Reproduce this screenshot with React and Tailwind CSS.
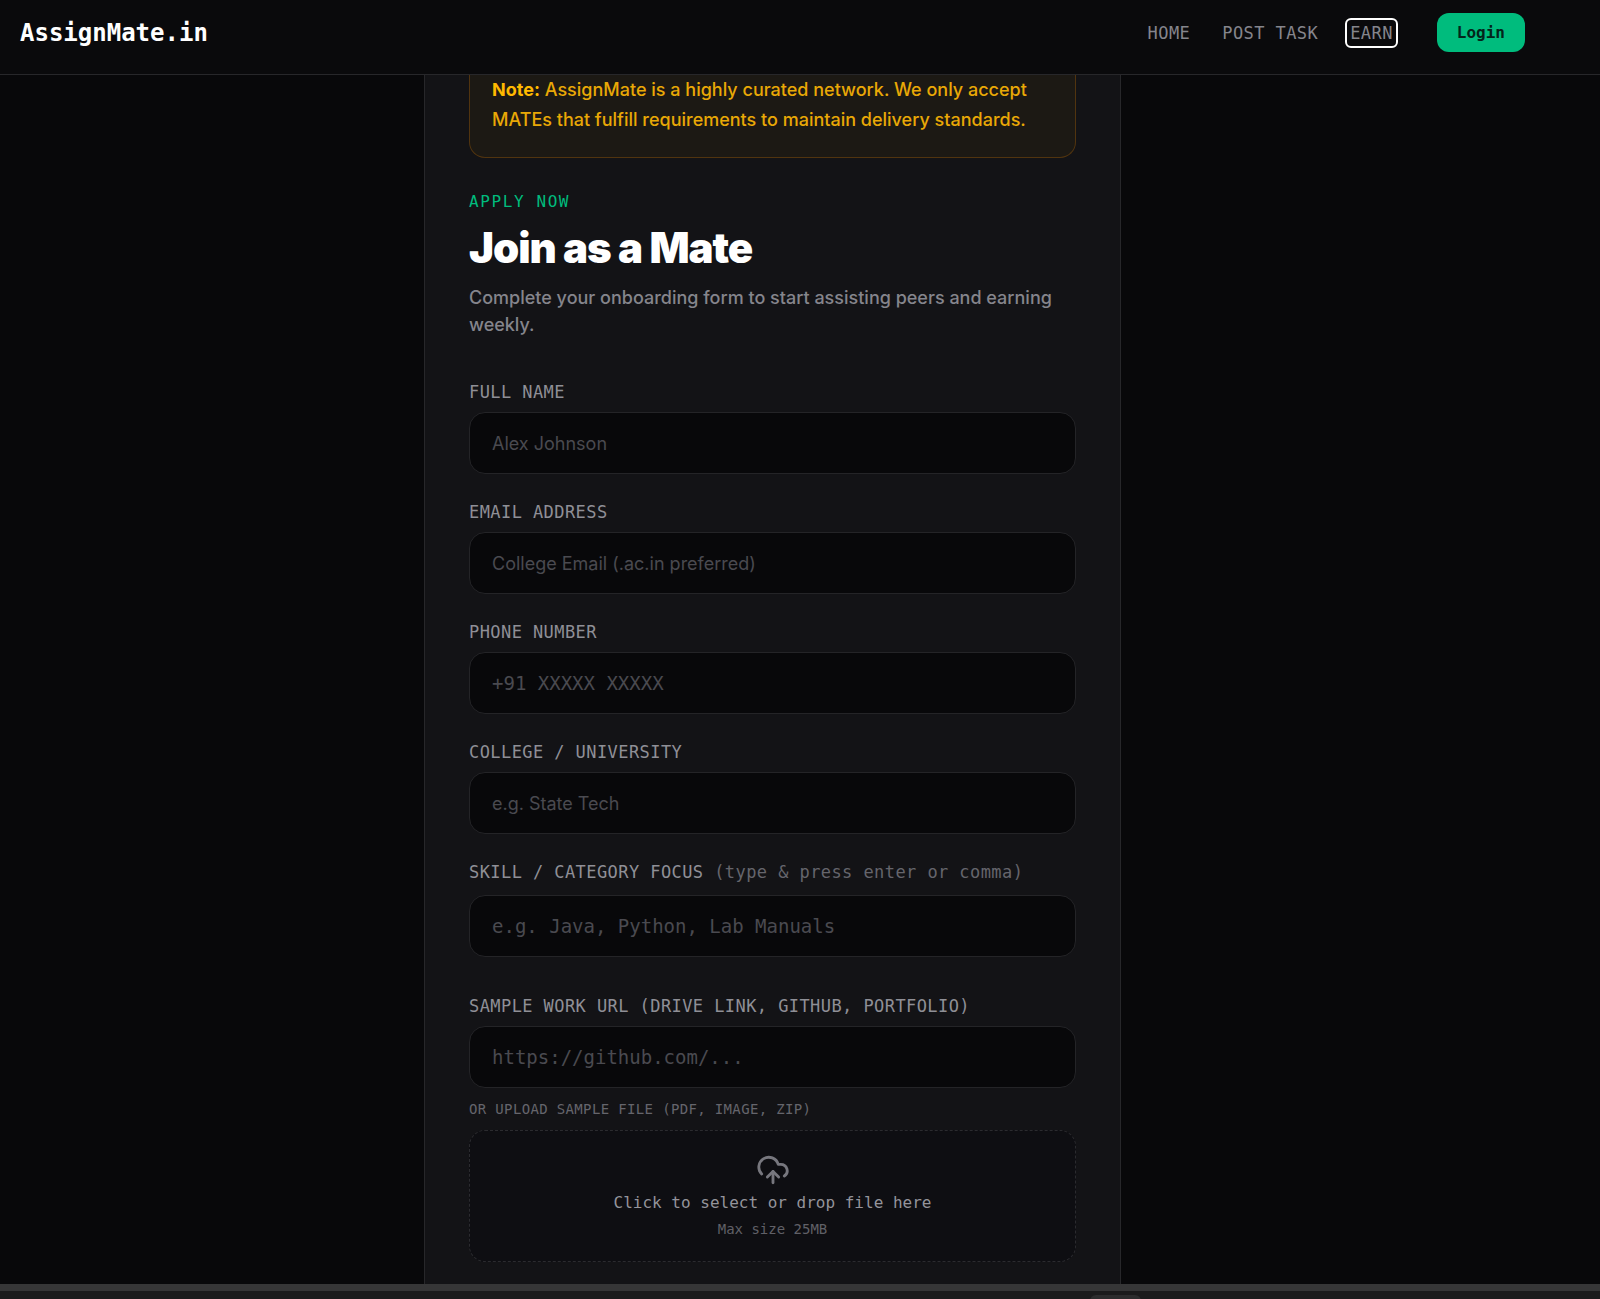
import { CloudUpload } from "lucide-react";

const fields = [
  { id: "name", label: "Full name", placeholder: "Alex Johnson", type: "text" },
  { id: "email", label: "Email address", placeholder: "College Email (.ac.in preferred)", type: "email" },
  { id: "phone", label: "Phone number", placeholder: "+91 XXXXX XXXXX", type: "tel", mono: true },
  { id: "college", label: "College / University", placeholder: "e.g. State Tech", type: "text" },
];

export default function App() {
  return (
    <div className="flex min-h-screen flex-col bg-[#08080a] font-['Inter','Liberation_Sans',sans-serif] text-zinc-400">
      <Header />
      <main className="flex grow justify-center px-4 lg:pr-[55px] lg:pl-0">
        <section className="w-full max-w-[697px] border-x border-[#27272a] bg-[#131316] px-11 pb-[22px]">
          <p className="rounded-b-2xl border-x border-b border-[#51340f] bg-[#1c1914] px-[22px] pb-[22px] text-[18px] leading-[30px] font-medium text-[#e9a806]">
            <strong className="font-bold text-[#ffb900]">Note:</strong> AssignMate is a highly curated network. We only
            accept MATEs that fulfill requirements to maintain delivery standards.
          </p>
          <p className="mt-8 font-['DejaVu_Sans_Mono',monospace] text-[16px] leading-6 tracking-widest text-[#00bc7d] uppercase">
            Apply now
          </p>
          <h1 className="mt-2.5 text-[42px] leading-[48px] font-black tracking-tight text-white">Join as a Mate</h1>
          <p className="mt-3 text-[18px] leading-[27px] font-medium text-[#85858c]">
            Complete your onboarding form to start assisting peers and earning weekly.
          </p>
          <ApplyForm />
        </section>
      </main>
      <Dock />
    </div>
  );
}

function Header() {
  return (
    <header className="border-b border-[#27272a] bg-[#0a0a0c]">
      <div className="flex items-center justify-between pt-[13px] pr-[75px] pb-[22px] pl-5 font-['DejaVu_Sans_Mono',monospace]">
        <a href="#" className="text-[24px] leading-8 font-bold text-white">
          AssignMate.in
        </a>
        <nav className="flex items-center gap-8 text-[17px] leading-5 tracking-wide text-[#85858c] uppercase">
          <a href="#home">Home</a>
          <a href="#post">Post task</a>
          <a href="#earn" className="rounded-[1px] outline-2 outline-offset-3 outline-white">
            Earn
          </a>
          <button
            type="button"
            className="ml-3 h-[39px] rounded-xl bg-[#00bc7d] px-5 text-[16px] font-bold tracking-normal text-[#04251b] normal-case"
          >
            Login
          </button>
        </nav>
      </div>
    </header>
  );
}

function ApplyForm() {
  return (
    <form className="mt-[42px] flex flex-col">
      <div className="flex flex-col gap-[26px]">
        {fields.map((field) => (
          <div key={field.id} className="flex flex-col gap-2">
            <Label htmlFor={field.id}>{field.label}</Label>
            <TextInput id={field.id} type={field.type} placeholder={field.placeholder} mono={field.mono} />
          </div>
        ))}
        <div className="flex flex-col gap-[11px]">
          <Label htmlFor="skills">
            Skill / Category focus <span className="text-[#65656c] normal-case">(type &amp; press enter or comma)</span>
          </Label>
          <TextInput id="skills" type="text" placeholder="e.g. Java, Python, Lab Manuals" mono />
        </div>
      </div>
      <div className="mt-[37px] flex flex-col gap-2">
        <Label htmlFor="sample">Sample work URL (Drive link, GitHub, Portfolio)</Label>
        <TextInput id="sample" type="url" placeholder="https://github.com/..." mono />
      </div>
      <div className="mt-[11px] flex flex-col gap-[11px] font-['DejaVu_Sans_Mono',monospace]">
        <label htmlFor="upload" className="text-[14px] leading-5 tracking-wide text-[#65656c] uppercase">
          Or upload sample file (PDF, image, zip)
        </label>
        <button
          id="upload"
          type="button"
          className="flex flex-col items-center gap-1 rounded-2xl border border-dashed border-[#2b2b2f] bg-[#0e0e12] py-[22px]"
        >
          <CloudUpload size={34} className="text-[#77777e]" />
          <span className="text-[16px] leading-6 text-[#94949b]">Click to select or drop file here</span>
          <span className="text-[14px] leading-5 text-[#606067]">Max size 25MB</span>
        </button>
      </div>
    </form>
  );
}

function Label({ htmlFor, children }) {
  return (
    <label
      htmlFor={htmlFor}
      className="font-['DejaVu_Sans_Mono',monospace] text-[17px] leading-6 tracking-wide text-[#8f8f96] uppercase"
    >
      {children}
    </label>
  );
}

function TextInput({ mono, ...props }) {
  const font = mono ? "font-['DejaVu_Sans_Mono',monospace] text-[19px]" : "text-[18px]";
  return (
    <input
      {...props}
      className={`h-[62px] w-full rounded-2xl border border-[#242427] bg-[#08080a] px-[22px] text-white outline-none placeholder:text-[#4a4a50] ${font}`}
    />
  );
}

// Strip of the desktop dock under the page
function Dock() {
  return (
    <footer className="h-[15px] overflow-hidden border-t-[7px] border-[#363637] bg-[#1b1b1c] pt-1">
      <div className="flex w-full justify-end pr-[459px]">
        <div className="h-2 w-[51px] rounded-t-md bg-[#2c2c2d]" />
      </div>
    </footer>
  );
}
